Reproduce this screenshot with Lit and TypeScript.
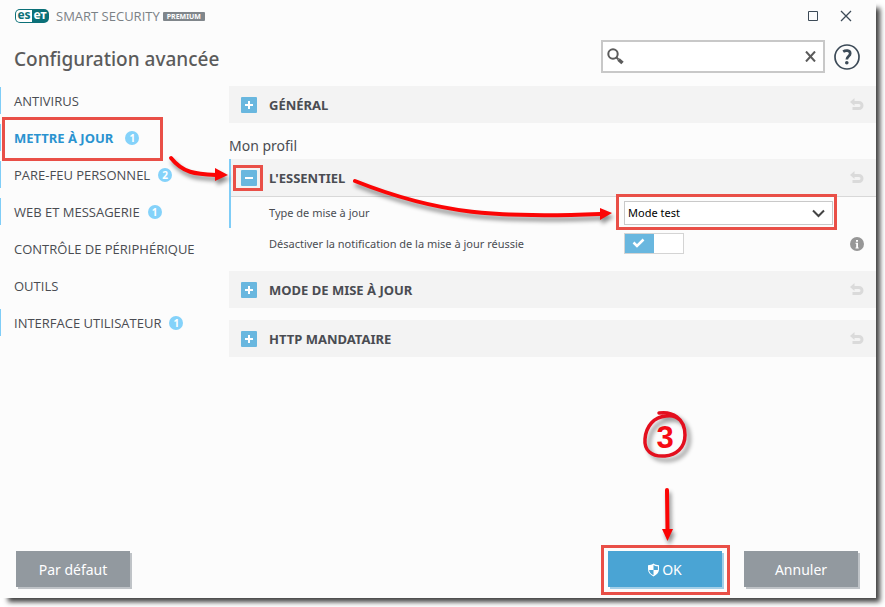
import { LitElement, html, css, svg, nothing } from "lit";
import { customElement, state } from "lit/decorators.js";
import { classMap } from "lit/directives/class-map.js";

interface MenuEntry {
  label: string;
  count?: number;
  modified?: boolean;
}

const MENU: MenuEntry[] = [
  { label: "ANTIVIRUS", modified: true },
  { label: "METTRE À JOUR", count: 1, modified: true },
  { label: "PARE-FEU PERSONNEL", count: 2, modified: true },
  { label: "WEB ET MESSAGERIE", count: 1, modified: true },
  { label: "CONTRÔLE DE PÉRIPHÉRIQUE" },
  { label: "OUTILS" },
  { label: "INTERFACE UTILISATEUR", count: 1, modified: true },
];

const undoIcon = svg`<svg width="14" height="13" viewBox="0 0 14 13" aria-hidden="true">
  <path d="M4 4.500H9A3 3 0 0 1 9 10.500H2.500" fill="none" stroke="#dadada" stroke-width="3"/>
  <path d="M0 4L4.500 0V8Z" fill="#dadada"/></svg>`;

const shieldIcon = svg`<svg width="11" height="14" viewBox="0 0 12 14" aria-hidden="true">
  <path d="M6 0 C7.500 1.200 9.500 1.800 12 1.800 V6 C12 10 9.500 12.500 6 14 C2.500 12.500 0 10 0 6 V1.800 C2.500 1.800 4.500 1.200 6 0 Z" fill="#fff"/>
  <path d="M6 1.500 V7 H1.200 V3 C3.200 2.900 4.700 2.400 6 1.500 Z M6 7 H10.800 C10.400 9.800 8.700 11.500 6 12.700 Z" fill="#4aa4d4" transform="matrix(-1 0 0 1 12 0)"/></svg>`;

@customElement("app-root")
export class AppRoot extends LitElement {
  @state() private current = 1;

  static styles = css`
    :host {
      display: flex;
      box-sizing: border-box;
      min-height: 100vh;
      padding: 0 9px 9px 0;
      background: #fff;
      color: #4a4c52;
      font: 13px/20px "Open Sans", "Noto Sans", sans-serif;
    }
    * { box-sizing: border-box; }
    svg { display: block; }
    button, input, select { font: inherit; color: inherit; }
    h1, h2, p, ul { margin: 0; padding: 0; }
    button { border: 0; padding: 0; background: none; cursor: pointer; }

    .window {
      flex: 1;
      min-width: 0;
      display: flex;
      flex-direction: column;
      background: #fcfcfc;
      box-shadow: 6px 6px 5px -2px rgba(0, 0, 0, 0.75);
    }
    .titlebar {
      display: flex;
      align-items: center;
      height: 32px;
      padding: 0 24px 0 15px;
    }
    .brand {
      display: flex;
      align-items: center;
      flex: 1;
      color: #7b8186;
      font-size: 13px;
    }
    .logo {
      display: flex;
      width: 34px;
      height: 14px;
      padding: 1px;
      border-radius: 5px;
      background: #0b7078;
      color: #fff;
      font: bold 12px/10px "Noto Sans", sans-serif;
    }
    .logo span { flex: 1; text-align: center; }
    .logo .light {
      border-radius: 4px 0 0 4px;
      background: #fff;
      color: #0b7078;
    }
    .product { margin: 0 3px 0 7px; }
    .edition {
      padding: 0 4px;
      border-radius: 1px;
      background: #80868b;
      color: #fff;
      font: bold 7px/9px "Noto Sans", sans-serif;
    }
    .winbuttons { display: flex; gap: 21px; }

    .heading {
      display: flex;
      align-items: center;
      height: 48px;
      padding: 0 16px 0 14px;
      gap: 9px;
    }
    h1 {
      flex: 1;
      padding-top: 6px;
      color: #5b5b5b;
      font: 500 19px/26px "Noto Sans", sans-serif;
    }
    .search {
      display: flex;
      align-items: center;
      width: 224px;
      height: 33px;
      padding: 0 7px 0 4px;
      border: 2px solid #c8c8c8;
      background: #fff;
    }
    .search input {
      flex: 1;
      min-width: 0;
      border: 0;
      outline: 0;
      background: none;
    }

    .body { flex: 1; display: flex; }
    .menu {
      width: 229px;
      padding-top: 7px;
      list-style: none;
      display: flex;
      flex-direction: column;
      gap: 10px;
    }
    .entry { position: relative; height: 27px; display: flex; }
    .entry.modified { border-left: 1px solid #7fcdf7; }
    .entry button {
      display: flex;
      align-items: center;
      gap: 8px;
      padding-left: 14px;
      white-space: nowrap;
    }
    .entry.modified button { padding-left: 13px; }
    .entry.current button {
      gap: 12px;
      color: #2a93d0;
      font-family: "Noto Sans", sans-serif;
      font-weight: bold;
    }
    .count {
      width: 14px;
      height: 14px;
      border-radius: 7px;
      background: #84d2fa;
      color: #fff;
      font: bold 10px/14px "Noto Sans", sans-serif;
      text-align: center;
    }

    .main { flex: 1; min-width: 0; padding-top: 6px; }
    .section { margin-bottom: 12px; }
    .section header {
      display: flex;
      align-items: center;
      height: 37px;
      padding: 0 12px;
      gap: 12px;
      background: #f3f3f3;
    }
    .section h2 {
      flex: 1;
      font: bold 13px/20px "Noto Sans", sans-serif;
    }
    .fold {
      position: relative;
      width: 16px;
      height: 16px;
      border-radius: 1px;
      background: #69b7df;
    }
    .profile {
      margin-bottom: 2px;
      font: 14px/22px "Noto Sans", sans-serif;
    }
    .open header { height: 38px; border-bottom: 1px solid #d8d8d8; }
    .changed { border-left: 2px solid #7fcdf7; }
    .changed header { padding-left: 10px; }
    .row {
      display: flex;
      align-items: center;
      height: 31px;
      padding: 0 12px 0 40px;
      font: 11px/18px "Noto Sans", sans-serif;
    }
    .changed .row { padding-left: 38px; }
    .row .label { flex: 1; min-width: 0; white-space: nowrap; }
    .field { position: relative; width: 209px; }
    .field select {
      display: block;
      appearance: none;
      width: 100%;
      height: 24px;
      padding: 0 3px;
      border: 1px solid #c9c9c9;
      border-radius: 0;
      background: #fff;
      color: #000;
    }
    .chevron { position: absolute; right: 8px; top: 8px; pointer-events: none; }
    .info { width: 31px; display: flex; justify-content: flex-end; }
    .toggle {
      appearance: none;
      display: block;
      width: 60px;
      height: 21px;
      margin: 0;
      border: 1px solid #d4d4d4;
      background: #fff;
    }
    .toggle:checked { background: linear-gradient(90deg, #69b7df 29px, #fff 29px); }
    .tick { position: absolute; left: 8px; top: 5px; pointer-events: none; }

    .footer {
      display: flex;
      gap: 22px;
      padding: 0 18px 11px 16px;
    }
    .action {
      display: flex;
      align-items: center;
      justify-content: center;
      gap: 3px;
      width: 114px;
      height: 36px;
      padding-top: 2px;
      background: #92999f;
      box-shadow: 2px 2px #bfc3c7;
      color: #fff;
      font: 14px/20px "Noto Sans", sans-serif;
    }
    .primary { background: #4aa4d4; box-shadow: 2px 2px #a3cfe8; }
    .confirm { position: relative; margin-left: auto; }

    /* Tutorial marks drawn over the controls */
    .frame {
      position: absolute;
      border: 3px solid #e94f47;
      pointer-events: none;
    }
    .frame-entry { left: 1px; top: -7px; width: 161px; height: 44px; }
    .frame-fold { inset: -5px -6px -5px -8px; }
    .frame-field { inset: -7px -4px -5px -8px; }
    .frame-ok { inset: -6px -8px -8px -7px; }
    .arrow {
      position: absolute;
      overflow: visible;
      pointer-events: none;
      fill: none;
      stroke: #fb0505;
      stroke-linecap: round;
      filter: drop-shadow(2px 4px 2px rgba(0, 0, 0, 0.45));
    }
    .arrow .head { fill: #fb0505; stroke: none; }
    .arrow-entry { left: 166px; top: 30px; }
    .arrow-field { right: 221px; top: -23px; }
    .arrow-ok { left: 52px; bottom: 45px; }
    .step {
      position: absolute;
      left: 34px;
      bottom: 129px;
      width: 46px;
      height: 48px;
      padding-top: 6px;
      text-align: center;
      color: #f60a14;
      font: bold 31px/44px "Liberation Sans", Arial, sans-serif;
    }
    .ring {
      position: absolute;
      inset: 0;
      fill: none;
      stroke: #e30f1e;
      stroke-linecap: round;
      overflow: visible;
      filter: drop-shadow(4px 4px 2px rgba(0, 0, 0, 0.4));
    }
  `;

  private menuEntry(entry: MenuEntry, index: number) {
    const current = index === this.current;
    return html`<li class=${classMap({ entry: true, modified: !!entry.modified, current })}>
      <button @click=${() => (this.current = index)}>
        <span>${entry.label}</span>
        ${entry.count ? html`<span class="count">${entry.count}</span>` : nothing}
      </button>
      ${index === 1
        ? html`<span class="frame frame-entry"></span>
            <svg class="arrow arrow-entry" width="62" height="28" viewBox="0 0 62 28" aria-hidden="true">
              <path d="M4 4 C16 19 28 20 49 21" stroke-width="4" />
              <path class="head" d="M48 14 L61 21 L48 27 Z" />
            </svg>`
        : nothing}
    </li>`;
  }

  private header(title: string, open = false) {
    return html`<header>
      <button class="fold" aria-label=${title} aria-expanded=${open}>
        <svg width="16" height="16" viewBox="0 0 16 16" aria-hidden="true">
          <path d=${open ? "M4 8H12" : "M4 8H12M8 4V12"} stroke="#fff" stroke-width="2" />
        </svg>
        ${open ? html`<span class="frame frame-fold"></span>` : nothing}
      </button>
      <h2>${title}</h2>
      <button aria-label="Rétablir">${undoIcon}</button>
    </header>`;
  }

  render() {
    return html`<div class="window">
      <div class="titlebar">
        <div class="brand">
          <span class="logo"><span class="light">es</span><span>eт</span></span>
          <span class="product">SMART SECURITY</span>
          <span class="edition">PREMIUM</span>
        </div>
        <div class="winbuttons">
          <button aria-label="Agrandir">
            <svg width="12" height="12" viewBox="0 0 12 12"><path d="M1.500 1.500H10.500V10.500H1.500Z" fill="none" stroke="#3c4a57" /></svg>
          </button>
          <button aria-label="Fermer">
            <svg width="12" height="12" viewBox="0 0 12 12"><path d="M1 1L11 11M11 1L1 11" fill="none" stroke="#3c4a57" stroke-width="1.300" /></svg>
          </button>
        </div>
      </div>

      <div class="heading">
        <h1>Configuration avancée</h1>
        <div class="search">
          <svg width="17" height="17" viewBox="0 0 17 17" aria-hidden="true" fill="none" stroke="#5b5b5b">
            <circle cx="6" cy="6" r="4.700" stroke-width="2" />
            <path d="M9.500 9.500L11.500 11.500" stroke-width="2" />
            <path d="M11.500 11.500L15.500 15" stroke-width="3.600" />
          </svg>
          <input type="text" aria-label="Rechercher" />
          <button aria-label="Effacer">
            <svg width="11" height="11" viewBox="0 0 11 11"><path d="M1 .5L10 10.500M10 .5L1 10.500" stroke="#5b5b5b" stroke-width="2" /></svg>
          </button>
        </div>
        <button aria-label="Aide">
          <svg width="26" height="28" viewBox="0 -2 26 28">
            <circle cx="13" cy="13" r="12" fill="none" stroke="#3c4a57" stroke-width="1.700" />
            <path d="M9.200 7.600C11.500 6 16.200 6 16.200 9.500C16.200 12.200 12.800 12.200 12.800 15.400" fill="none" stroke="#3c4a57" stroke-width="2.700" />
            <circle cx="12.800" cy="18.800" r="1.800" fill="#3c4a57" />
          </svg>
        </button>
      </div>

      <div class="body">
        <ul class="menu">
          ${MENU.map((entry, index) => this.menuEntry(entry, index))}
        </ul>
        <div class="main">
          <section class="section">${this.header("GÉNÉRAL")}</section>
          <p class="profile">Mon profil</p>
          <section class="section open">
            <div class="changed">
              ${this.header("L'ESSENTIEL", true)}
              <div class="row">
                <label class="label" for="update-type">Type de mise à jour</label>
                <div class="field">
                  <select id="update-type"><option>Mode test</option></select>
                  <svg class="chevron" width="13" height="9" viewBox="0 0 13 9" aria-hidden="true">
                    <path d="M1 1.500L6.500 7L12 1.500" fill="none" stroke="#444" stroke-width="2" />
                  </svg>
                  <span class="frame frame-field"></span>
                  <svg class="arrow arrow-field" width="259" height="45" viewBox="0 0 259 45" aria-hidden="true">
                    <path d="M2 3 C87 37 147 40 247 36" stroke-width="4" />
                    <path class="head" d="M247 30 L259 35 L247 42 Z" />
                  </svg>
                </div>
                <span class="info"></span>
              </div>
            </div>
            <div class="row">
              <label class="label" for="silent">Désactiver la notification de la mise à jour réussie</label>
              <div class="field">
                <input class="toggle" id="silent" type="checkbox" checked />
                <svg class="tick" width="13" height="10" viewBox="0 0 13 10" aria-hidden="true">
                  <path d="M1.500 4.500L5 8L11.500 1.500" fill="none" stroke="#fff" stroke-width="2.500" />
                </svg>
              </div>
              <span class="info">
                <svg width="14" height="14" viewBox="0 0 14 14" role="img" aria-label="Information">
                  <circle cx="7" cy="7" r="7" fill="#979797" />
                  <path d="M6 3H8V4.700H6ZM5.500 5.800H8V10.500H8.700V11.500H5.500V10.500H6.200V6.800H5.500Z" fill="#fff" />
                </svg>
              </span>
            </div>
          </section>
          <section class="section">${this.header("MODE DE MISE À JOUR")}</section>
          <section class="section">${this.header("HTTP MANDATAIRE")}</section>
        </div>
      </div>

      <div class="footer">
        <button class="action">Par défaut</button>
        <div class="confirm">
          <button class="action primary">${shieldIcon}<span>OK</span></button>
          <span class="frame frame-ok"></span>
          <svg class="arrow arrow-ok" width="14" height="56" viewBox="0 0 14 56" aria-hidden="true">
            <path d="M7 4L7.500 44" stroke-width="4" />
            <path class="head" d="M2 43H13L7.500 55Z" />
          </svg>
          <span class="step">
            <svg class="ring" width="46" height="48" viewBox="0 0 46 48" aria-hidden="true">
              <path d="M17 3C30 1 43 8 43 25C43 38 34 45 23 46C9 47 2 40 3 29C4 16 12 7 24 6C30 5 34 6 38 10" stroke-width="3.500" />
            </svg>3</span>
        </div>
        <button class="action">Annuler</button>
      </div>
    </div>`;
  }
}
